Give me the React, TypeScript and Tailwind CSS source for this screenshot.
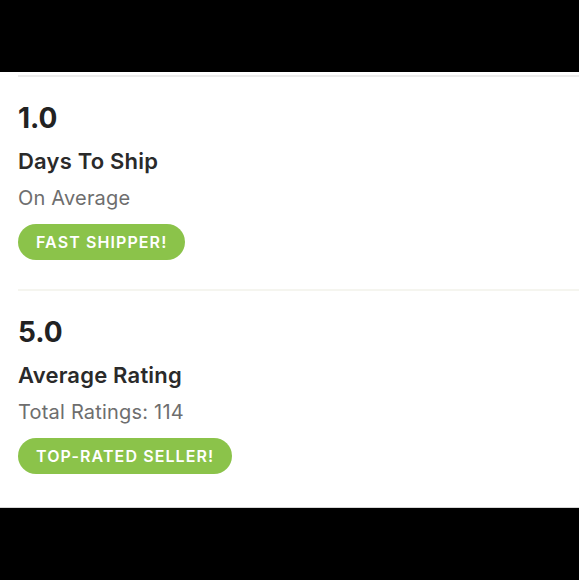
import React from "react";

interface Stat {
  value: string;
  label: string;
  sub: string;
  badge: string;
}

const stats: Stat[] = [
  { value: "1.0", label: "Days To Ship", sub: "On Average", badge: "FAST SHIPPER!" },
  { value: "5.0", label: "Average Rating", sub: "Total Ratings: 114", badge: "TOP-RATED SELLER!" },
];

function StatBlock({ s, first }: { s: Stat; first: boolean }) {
  return (
    <div className={first ? "border-t-2 border-[#ececec]" : "border-t-2 border-[#f5f5ef]"}>
      <div className="pt-[24px] pb-[29px]">
        <div className="text-[28px] font-bold leading-[34px] text-[#222]">{s.value}</div>
        <div className="mt-[12px] text-[22px] font-semibold leading-[28px] tracking-[0.2px] text-[#2a2a2a]">
          {s.label}
        </div>
        <div className="mt-[11px] text-[20px] leading-[24px] tracking-[0.2px] text-[#6e6e6e]">{s.sub}</div>
        <div className="mt-[14px] flex">
          <span className="flex h-[36px] items-center rounded-full bg-[#8bc34a] px-[18px] text-[16px] font-semibold tracking-[1.1px] text-white">
            {s.badge}
          </span>
        </div>
      </div>
    </div>
  );
}

export default function App() {
  return (
    <div
      className="flex h-[580px] w-[579px] flex-col bg-black"
      style={{ fontFamily: "Inter, 'Open Sans', sans-serif" }}
    >
      <div className="h-[72px]" />
      <div className="h-[436px] border-b border-[#d6d6d6] bg-white pl-[18px] pt-[3px]">
        {stats.map((s, i) => (
          <StatBlock key={s.value} s={s} first={i === 0} />
        ))}
      </div>
    </div>
  );
}
